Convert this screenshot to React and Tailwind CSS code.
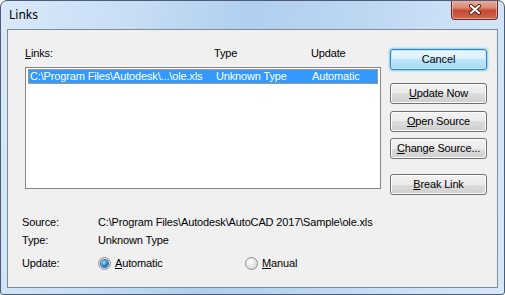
import React from 'react'

const BTN =
  'h-[21px] w-[97px] flex items-center justify-center rounded-[3px] border border-[#707070] bg-[linear-gradient(#f2f2f2_0%,#ebebeb_50%,#dddddd_50%,#cfcfcf_100%)] shadow-[inset_0_0_0_1px_#fcfcfc] text-black'

function Mn({ ch, rest }) {
  return (
    <span>
      <span className="underline underline-offset-[1px]">{ch}</span>
      {rest}
    </span>
  )
}

function Radio({ checked }) {
  return (
    <span className="w-[13px] h-[13px] rounded-full border border-[#8f8f8f] bg-[radial-gradient(circle_at_40%_35%,#ffffff,#dcdcdc_70%,#c8c8c8)] flex items-center justify-center">
      {checked && (
        <span className="w-[7px] h-[7px] rounded-full bg-[radial-gradient(circle_at_40%_35%,#9fe0ff,#1d78c6_60%,#0c4f8f)] shadow-[0_0_0_1px_#3b6e99]" />
      )}
    </span>
  )
}

export default function App() {
  return (
    <div className="w-[505px] h-[295px] rounded-t-[7px] rounded-b-[3px] border border-[#4a5d75] bg-[linear-gradient(100deg,#d9e9f9_0%,#c6ddf4_25%,#b0cfef_45%,#bcd6f2_65%,#cfe3f7_85%,#d6e7f8_100%)] flex flex-col font-['Liberation_Sans',sans-serif] text-[11px] tracking-[-0.15px] text-black overflow-hidden">
      <div className="h-[28px] flex items-start shrink-0">
        <div className="pl-[8px] pt-[6px] text-[12px] tracking-normal font-['Noto_Sans',sans-serif] leading-[16px]">Links</div>
        <div className="ml-auto mr-[6px] -mt-[1px] w-[47px] h-[20px] rounded-b-[4px] border border-t-0 border-[#6b2a20] bg-[linear-gradient(#eab0a2_0%,#d98a76_40%,#c44a33_55%,#cf6650_100%)] shadow-[inset_0_0_0_1px_rgba(255,220,210,0.5)] flex items-center justify-center">
          <svg width="14" height="11" viewBox="0 0 14 11">
            <path d="M3 2 L11 9 M11 2 L3 9" stroke="#4a1d16" strokeWidth="4" strokeLinecap="round" />
            <path d="M3 2 L11 9 M11 2 L3 9" stroke="#ffffff" strokeWidth="2.2" strokeLinecap="round" />
          </svg>
        </div>
      </div>

      <div className="mx-[6px] mb-[6px] h-[259px] border border-[#7f8a99] bg-[#f0f0f0] flex flex-col">
        <div className="flex items-start pl-[17px]">
          <div className="w-[356px] pt-[16px]">
            <div className="h-[14px] leading-[14px] flex">
              <span className="w-[189px]">
                <Mn ch="L" rest="inks:" />
              </span>
              <span className="w-[97px]">Type</span>
              <span>Update</span>
            </div>
            <div className="mt-[7px] h-[122px] border border-[#828790] bg-white pt-[1px] px-[2px]">
              <div className="h-[15px] bg-[#3399ff] border border-dotted border-[#ff9a3c] text-white leading-[13px] flex">
                <span className="w-[187px] pl-[1px] whitespace-nowrap">C:\Program Files\Autodesk\...\ole.xls</span>
                <span className="w-[96px] whitespace-nowrap">Unknown Type</span>
                <span>Automatic</span>
              </div>
            </div>
          </div>
          <div className="ml-[9px] pt-[19px] flex flex-col">
            <div className="h-[21px] w-[97px] flex items-center justify-center rounded-[3px] border border-[#3c7fb1] bg-[linear-gradient(#eaf6fd_0%,#d9f0fc_50%,#bee6fd_50%,#a7d9f5_100%)] shadow-[inset_0_0_0_1px_#bfe9ff,0_0_2px_1px_#7fd1f5]">
              Cancel
            </div>
            <div className={BTN + ' mt-[13px]'}>
              <Mn ch="U" rest="pdate Now" />
            </div>
            <div className={BTN + ' mt-[7px]'}>
              <Mn ch="O" rest="pen Source" />
            </div>
            <div className={BTN + ' mt-[6px]'}>
              <Mn ch="C" rest="hange Source..." />
            </div>
            <div className={BTN + ' mt-[15px]'}>
              <Mn ch="B" rest="reak Link" />
            </div>
          </div>
        </div>

        <div className="mt-[20px] pl-[14px] flex flex-col">
          <div className="h-[14px] leading-[14px] flex">
            <span className="w-[76px]">Source:</span>
            <span className="whitespace-nowrap">C:\Program Files\Autodesk\AutoCAD 2017\Sample\ole.xls</span>
          </div>
          <div className="mt-[4px] h-[14px] leading-[14px] flex">
            <span className="w-[76px]">Type:</span>
            <span>Unknown Type</span>
          </div>
          <div className="mt-[9px] h-[14px] leading-[14px] flex items-center">
            <span className="w-[76px]">Update:</span>
            <span className="w-[147px] flex items-center gap-[4px]">
              <Radio checked />
              <Mn ch="A" rest="utomatic" />
            </span>
            <span className="flex items-center gap-[4px]">
              <Radio />
              <Mn ch="M" rest="anual" />
            </span>
          </div>
        </div>
      </div>
    </div>
  )
}
